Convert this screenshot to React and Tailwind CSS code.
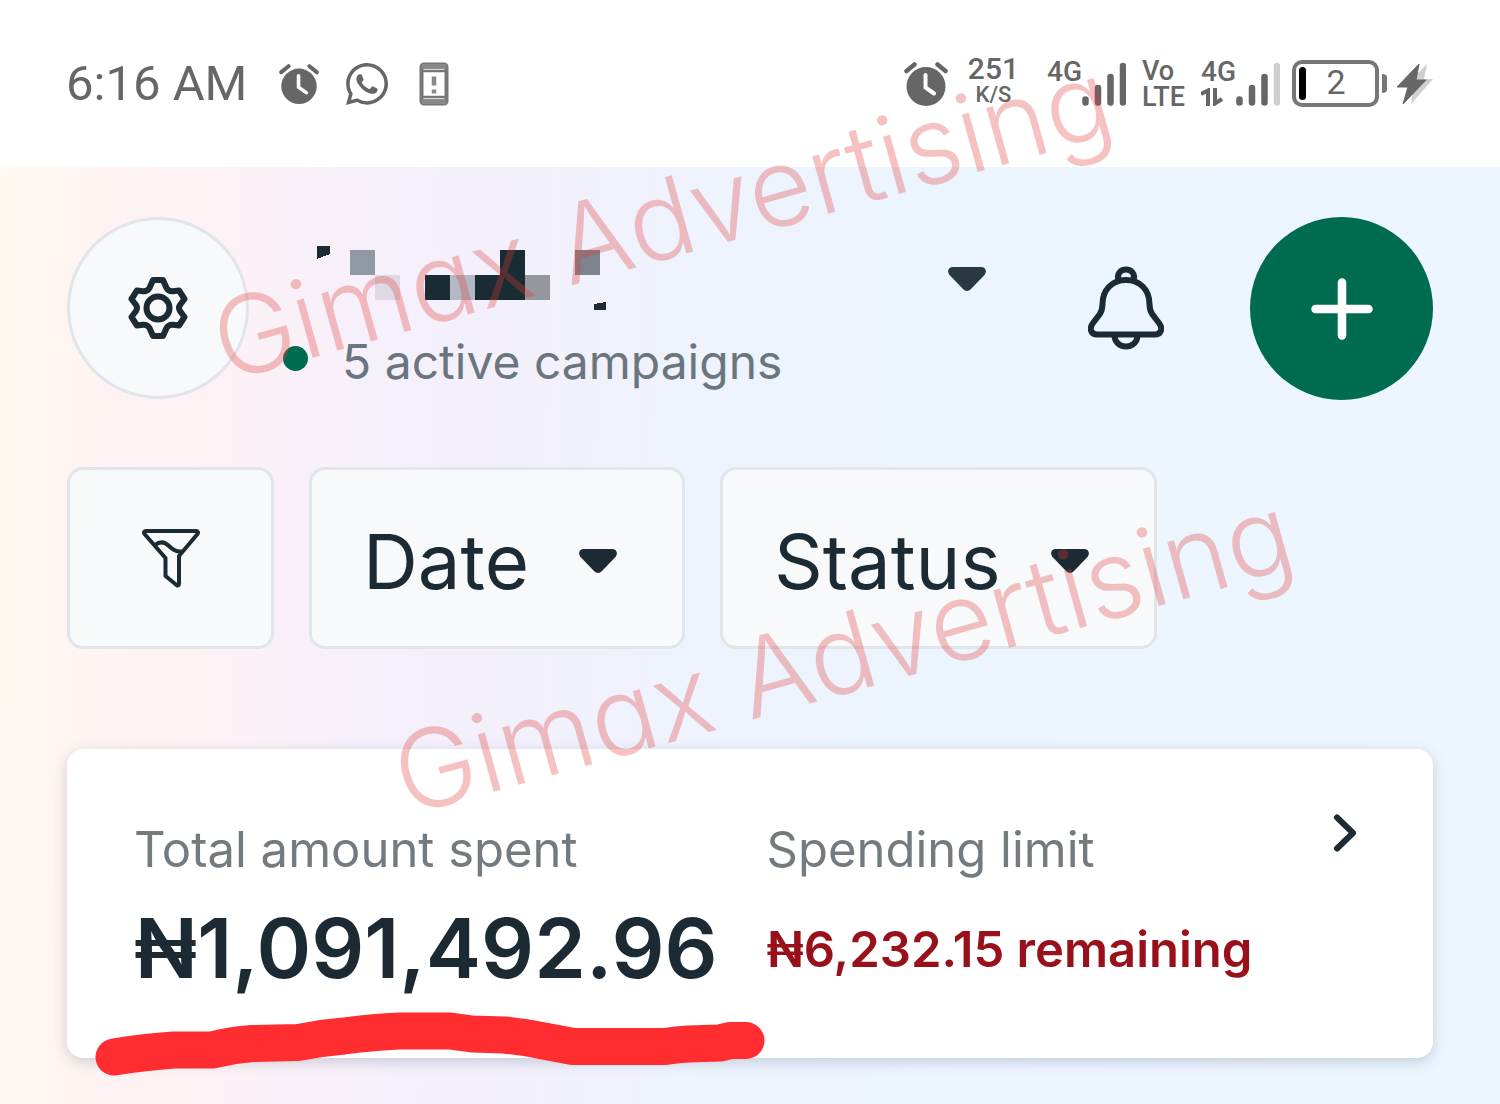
import React, { useState } from 'react';
import { FaWhatsapp } from 'react-icons/fa';

const AlarmIcon = ({ className }) => (
  <svg viewBox="0 0 44 44" className={className} aria-hidden="true">
    <circle cx="22" cy="24.5" r="19.5" fill="currentColor" />
    <path d="M2.5 9 10.500 2.500M41.500 9 33.500 2.500" stroke="currentColor" strokeWidth="4.500" strokeLinecap="round" />
    <path d="M21.500 13v12.500l8.500 6" fill="none" stroke="#fff" strokeWidth="4" strokeLinecap="round" />
  </svg>
);

const PhoneAlertIcon = () => (
  <svg viewBox="0 0 30 44" className="w-[30px] h-11 ml-1" fill="none" aria-hidden="true">
    <rect x="2.500" y="2.500" width="25" height="39" rx="2.500" stroke="#777" strokeWidth="4" />
    <path d="M3 4.500h24M3 39.500h24" stroke="#888" strokeWidth="5" />
    <path d="M3 9h24M3 35h24" stroke="#777" strokeWidth="2.500" />
    <path d="M15 14.500v9M15 27.500v4" stroke="#888" strokeWidth="4.500" />
  </svg>
);

const SignalBars = ({ weak }) => (
  <svg viewBox="0 0 44 44" className="size-11" fill="none" strokeWidth="6.500" strokeLinecap="round" aria-hidden="true">
    <path d="M3.500 37.500v3M16 26v14.500M28.500 15v25.500" stroke="#666" />
    <path d="M41 4v36.500" stroke={weak ? '#cfcfcf' : '#666'} />
  </svg>
);

const BatteryIcon = () => (
  <div className="relative">
    <svg viewBox="0 0 96 48" className="w-24 h-12" fill="none" aria-hidden="true">
      <rect x="2" y="2" width="83" height="43" rx="8" stroke="#777" strokeWidth="4" />
      <path d="M10.500 10.500v26" stroke="#000" strokeWidth="7" strokeLinecap="round" />
      <path d="M90 14c3 0 5 1 5 3v13c0 2-2 3-5 3z" fill="#777" />
    </svg>
    <span className="absolute top-0 bottom-1 left-0 right-2 flex items-center justify-center text-[34px]">2</span>
  </div>
);

const BoltIcon = () => (
  <svg viewBox="0 0 38 44" className="w-[38px] h-11" aria-hidden="true">
    <path d="M31 2 9 24h9l-3 18 22-25h-9z" fill="#cfcfcf" />
    <path d="M23 2 1 25h11L7 42 30 18H20z" fill="#666" stroke="#666" strokeWidth="1" strokeLinejoin="round" />
  </svg>
);

const Caret = ({ className }) => (
  <svg viewBox="0 0 38 24" className={className} aria-hidden="true">
    <path d="M5 0h28c5 0 6.500 5 3 8.500L23 22c-2.500 2.500-5.500 2.500-8 0L2 8.500C-1.500 5 0 0 5 0z" fill="currentColor" />
  </svg>
);

const GearIcon = () => (
  <svg viewBox="0 0 60 64" className="w-[60px] h-16" fill="none" stroke="currentColor" strokeWidth="6" strokeLinejoin="round" aria-hidden="true">
    <path d="M25 4h10l3.500 8c1.500 2.500 4 3.500 6.500 3.200l6-.7L56.500 23l-4.500 6c-1.300 2-1.300 4 0 6l4.500 6-5.500 8.500-6-.7c-2.500-.3-5 .7-6.500 3.200L35 60H25l-3.500-8c-1.500-2.500-4-3.500-6.500-3.200l-6 .7L3.500 41l4.500-6c1.300-2 1.300-4 0-6l-4.500-6L9 14.500l6 .7c2.500.3 5-.7 6.500-3.200z" />
    <circle cx="30" cy="32" r="11.500" />
  </svg>
);

const BellIcon = () => (
  <svg viewBox="0 0 76 84" className="w-[76px] h-[84px]" fill="none" stroke="currentColor" strokeWidth="6" strokeLinejoin="round" aria-hidden="true">
    <path d="M30.500 14c-2-6 2-10.500 7.500-10.500S47.500 8 45.500 14" />
    <path d="M38 14c-14 0-23.500 10-23.500 24 0 5-.5 7-3 10.500L5 57c-4.500 6-1.500 11.500 4 11.500h58c5.500 0 8.500-5.500 4-11.500l-6.500-8.500c-2.500-3.500-3-5.500-3-10.500 0-14-9.500-24-23.500-24z" />
    <path d="M26.500 69c0 7 5 11.500 11.500 11.500S49.500 76 49.500 69" />
  </svg>
);

const FunnelIcon = () => (
  <svg viewBox="0 0 58 60" className="w-[58px] h-[60px]" fill="none" stroke="currentColor" strokeWidth="4" strokeLinejoin="round" strokeLinecap="round" aria-hidden="true">
    <path d="M4 3h50c2 0 2.500 1.500 1.500 3L37 28v27.500c0 2-1 2.500-2.500 1.500L23.500 48V30L2.500 6C1.500 4.500 2 3 4 3z" />
    <path d="M13 17c5-4 10-3 14 1 4 4 7 6 12 5.500" />
  </svg>
);

// Account name, hidden behind mosaic tiles
const HiddenName = () => (
  <svg viewBox="317 245 290 67" className="w-[290px] h-[67px]" shapeRendering="crispEdges" role="img" aria-label="Hidden account name">
    <path d="M317 246h13v8l-13 5z" fill="#1c2b33" />
    <rect x="350" y="250" width="25" height="25" fill="#9199a4" />
    <rect x="375" y="275" width="25" height="25" fill="#dfd9e5" />
    <rect x="425" y="275" width="25" height="25" fill="#1a2c33" />
    <rect x="450" y="275" width="25" height="25" fill="#b3b9c4" />
    <rect x="475" y="275" width="25" height="25" fill="#1a2c33" />
    <rect x="500" y="250" width="25" height="50" fill="#1a2c33" />
    <rect x="525" y="275" width="25" height="25" fill="#94979d" />
    <rect x="575" y="250" width="25" height="25" fill="#7c838d" />
    <path d="M594 304l12-2v8h-12z" fill="#1c2b33" />
  </svg>
);

const StatusBar = () => (
  <div className="h-[167px] bg-white px-[66px] flex items-center justify-between font-['Roboto',sans-serif] text-[#666]">
    <div className="flex items-center gap-6">
      <span className="mr-2 text-[49px] leading-none">6:16 AM</span>
      <AlarmIcon className="size-10" />
      <FaWhatsapp size={48} />
      <PhoneAlertIcon />
    </div>
    <div className="flex items-center gap-4 font-medium leading-none">
      <AlarmIcon className="size-11 mr-1" />
      <div className="flex flex-col items-center mr-3 mb-1">
        <span className="text-[30px] leading-[26px]">251</span>
        <span className="text-[22px] leading-[26px]">K/S</span>
      </div>
      <div className="flex h-11">
        <span className="text-[28px] leading-5">4G</span>
        <SignalBars />
      </div>
      <div className="flex flex-col text-[27px] leading-[26px]">
        <span>Vo</span>
        <span>LTE</span>
      </div>
      <div className="flex h-11">
        <div>
          <div className="text-[28px] leading-5">4G</div>
          <svg viewBox="0 0 22 18" className="w-[22px] h-[18px] mt-1.5" fill="none" stroke="#666" strokeWidth="4" aria-hidden="true">
            <path d="M0 6 7 2.500V18M14 0v15.500l7-4.500" />
          </svg>
        </div>
        <SignalBars weak />
      </div>
      <div className="-ml-1 flex items-center gap-2 font-normal">
        <BatteryIcon />
        <BoltIcon />
      </div>
    </div>
  </div>
);

const FilterSelect = ({ label, value, onChange }) => (
  <div className="relative">
    <select
      aria-label={label}
      value={value}
      onChange={(e) => onChange(e.target.value)}
      className="h-[182px] appearance-none rounded-2xl border-3 border-[#e1e5ea] bg-[#f7f9fb] pt-1.5 pl-[51px] pr-[153px] text-[76px] text-[#1c2b33]"
    >
      <option value="">{label}</option>
    </select>
    <Caret className="absolute right-[68px] top-[82px] w-[38px] h-6 pointer-events-none" />
  </div>
);

const Watermark = () => (
  <svg
    className="absolute inset-0 size-full pointer-events-none font-['Inter',sans-serif] font-[350] text-[109px] [font-feature-settings:'cv11']"
    fill="#e23b38"
    fillOpacity="0.31"
  >
    <text transform="translate(226 382) rotate(-15.6)">Gimax Advertising</text>
    <text transform="translate(407 816) rotate(-15.6)">Gimax Advertising</text>
  </svg>
);

const App = () => {
  const [date, setDate] = useState('');
  const [status, setStatus] = useState('');

  return (
    <div className="relative min-h-screen flex flex-col overflow-hidden font-['Inter',sans-serif] text-[#1c2b33]">
      <StatusBar />

      <main className="flex-1 px-[67px] pt-[50px] pb-[46px] bg-[linear-gradient(91deg,#fff9f1_0%,#fef3f2_7%,#fdf1f4_14%,#f6f0fb_24%,#f2f0fb_35%,#eef3fd_46%,#ecf4fe_60%,#edf6fe_100%)]">
        {/* Account header */}
        <header className="flex items-start">
          <button aria-label="Settings" className="size-[182px] shrink-0 rounded-full border-3 border-[#e1e5ea] bg-[#f7f9fb] flex items-center justify-center">
            <GearIcon />
          </button>
          <div className="flex-1 ml-[34px] mr-[102px] mt-7">
            <button aria-label="Switch account" className="w-full pl-[34px] flex items-center justify-between">
              <HiddenName />
              <Caret className="w-[38px] h-6 text-[#283943]" />
            </button>
            <div className="mt-5 flex items-center gap-[34px] text-[48px] leading-[60px] text-[#6b757d]">
              <span className="mb-2 size-[25px] rounded-full bg-[#006c4f]" />
              <span>5 active campaigns</span>
            </div>
          </div>
          <button aria-label="Notifications" className="mt-[49px] mr-[86px]">
            <BellIcon />
          </button>
          <button aria-label="Create" className="size-[183px] shrink-0 rounded-full bg-[#006c4f] flex items-center justify-center">
            <svg viewBox="0 0 62 62" className="size-[62px]" stroke="#fff" strokeWidth="8.500" strokeLinecap="round" aria-hidden="true">
              <path d="M31 4.500v53M4.500 31h53" />
            </svg>
          </button>
        </header>

        {/* Filters */}
        <div className="mt-[67px] flex gap-[35px]">
          <button aria-label="Filters" className="w-[207px] h-[182px] rounded-2xl border-3 border-[#e1e5ea] bg-[#f7f9fb] flex items-center justify-center">
            <FunnelIcon />
          </button>
          <FilterSelect label="Date" value={date} onChange={setDate} />
          <FilterSelect label="Status" value={status} onChange={setStatus} />
        </div>

        {/* Spending summary */}
        <section className="relative mt-[100px] rounded-2xl bg-white shadow-[0_4px_14px_rgba(30,50,80,0.2)] pl-[67px] pr-[76px] pt-[71px] pb-[66px] flex items-start">
          <div className="flex-1 grid grid-cols-[633fr_567fr]">
            <div>
              <div className="text-[49px] leading-[60px] text-[#737b81]">Total amount spent</div>
              <div className="mt-[26px] text-[83px] leading-[84px] font-semibold">₦1,091,492.96</div>
            </div>
            <div>
              <div className="text-[49px] leading-[60px] text-[#737b81]">Spending limit</div>
              <div className="mt-7 text-[49px] leading-[84px] font-semibold text-[#98101a]">₦6,232.15 remaining</div>
            </div>
          </div>
          <button aria-label="Spending details" className="-mt-1.5">
            <svg viewBox="0 0 24 38" className="w-6 h-[38px]" fill="none" stroke="currentColor" strokeWidth="6" strokeLinecap="round" strokeLinejoin="round" aria-hidden="true">
              <path d="M4 3.500 20 19 4 34.500" />
            </svg>
          </button>
          <svg viewBox="94 1010 672 68" className="absolute left-[27px] -bottom-5 w-[672px] h-[68px] pointer-events-none" fill="none" stroke="#ff2d30" strokeWidth="37" strokeLinecap="round" strokeLinejoin="round" aria-hidden="true">
            <path d="M114 1057Q145 1052 174 1050H212Q232 1045 252 1043.500L298 1042.500Q320 1038 344 1036 375 1032 399 1031H450L472 1034 504 1035Q525 1037 541 1040.500L573 1046.500H665Q678 1044.500 688 1044L720 1043 730 1040.500H746" />
          </svg>
        </section>
      </main>

      <Watermark />
    </div>
  );
};

export default App;
